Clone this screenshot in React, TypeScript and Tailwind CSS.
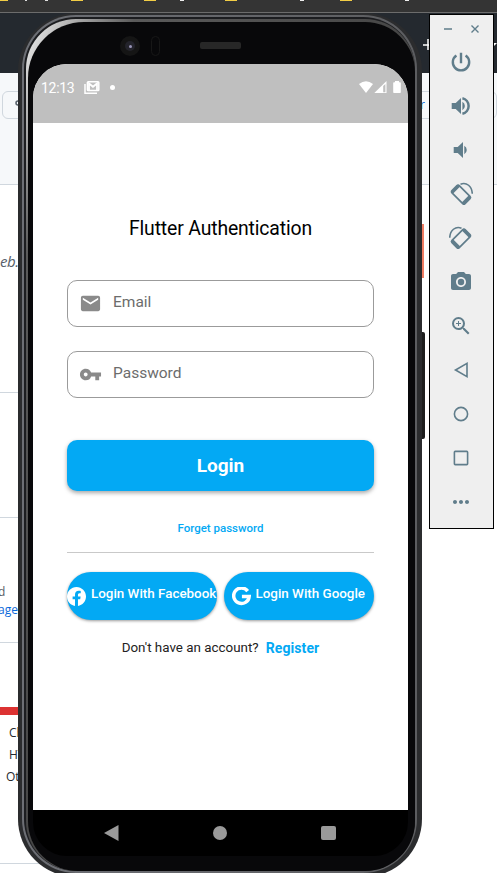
import type { ReactNode } from 'react';
import { MdCameraAlt, MdZoomIn, MdMoreHoriz, MdEmail, MdVpnKey } from 'react-icons/md';

/* Page behind the emulator window */
function Backdrop() {
  return (
    <div className="flex h-full w-full flex-col bg-white font-['Open_Sans',sans-serif] text-[13px] text-[#24292f]">
      <div className="flex h-[13px] shrink-0 items-start border-b border-[#6c6c6c] bg-[#343434]">
        <i className="h-px w-2 bg-[#f2cd45]" />
        <i className="ml-[17px] h-px w-[2px] bg-[#ddd]" />
        <i className="ml-[18px] h-px w-[3px] bg-[#ddd]" />
        <i className="ml-[23px] h-px w-3 bg-[#f2cd45]" />
        <i className="ml-[61px] h-px w-3 bg-[#f2cd45]" />
        <i className="ml-[24px] h-px w-1 bg-[#eee]" />
        <i className="ml-[41px] h-px w-3 bg-[#f2cd45]" />
        <i className="ml-[63px] h-px w-1 bg-[#eee]" />
        <i className="ml-[36px] h-px w-3 bg-[#f2cd45]" />
        <i className="ml-[53px] h-px w-1 bg-[#eee]" />
      </div>
      <div className="flex h-[60px] shrink-0 justify-end bg-[#24292f] text-white">
        <svg className="mt-[26px] h-3 w-[75px]" viewBox="0 0 75 12" fill="none" stroke="white" strokeWidth="1.5">
          <path d="M1 6h11M6 0v11" />
          <path d="M67 4h8l-4 4z" fill="white" stroke="none" />
        </svg>
      </div>
      <div className="flex h-[112px] shrink-0 items-start justify-between border-b border-[#d0d7de] bg-[#f6f8fa] pt-[18px]">
        <div className="ml-[2px] flex h-7 w-[60px] items-center rounded-md border border-[#d0d7de] pl-3">
          <svg className="h-3 w-3" viewBox="0 0 12 12" fill="none" stroke="#57606a" strokeWidth="1.5">
            <circle cx="3" cy="4" r="2" />
          </svg>
        </div>
        <div className="flex h-7 w-[96px] items-center rounded-md border border-[#d0d7de] pl-[18px] text-[12px] text-[#0969da]">
          r
        </div>
      </div>
      {/* article column */}
      <div className="flex w-[200px] flex-1 flex-col">
        <div className="h-[208px] shrink-0 border-b border-[#d0d7de] pt-[64px]">
          <span className="text-[15px] leading-6 tracking-[-0.4px] text-[#57606a] italic">eb.</span>
        </div>
        <div className="h-[125px] shrink-0 border-b border-[#d0d7de]" />
        <div className="h-[125px] shrink-0 border-b border-[#d0d7de] pt-[65px] text-[12px] leading-[18px]">
          <p className="-ml-[2px] text-[#57606a]">d</p>
          <p className="-ml-[2px] text-[#0969da]">age</p>
        </div>
        <div className="h-[221px] shrink-0 border-b border-[#d0d7de] pt-[64px]">
          <div className="h-2 w-[60px] bg-[#dc3232]" />
          <div className="pt-[7px] text-[12px] leading-[22px]">
            <p className="pl-[9px]">Ch</p>
            <p className="pl-[9px]">HT</p>
            <p className="pl-[6px]">Oth</p>
          </div>
        </div>
      </div>
    </div>
  );
}

function StatusBar() {
  return (
    <div className="flex h-[59px] shrink-0 items-start bg-[#bfbfbf] pt-[15px] pr-[7px] pl-[8px] text-white">
      <span className="w-[42.5px] text-[14px] leading-[18px] tracking-[-0.3px] whitespace-nowrap">12:13</span>
      <svg className="mt-[2px] h-[13px] w-4" viewBox="0 0 16 13" fill="none" stroke="white" strokeWidth="1.5">
        <path d="M1 3v9.2h12" />
        <rect x="3.4" y="0.8" width="11.4" height="8.8" rx="0.8" />
        <path d="M5 9V2.5l4 3.3 4-3.3V9" strokeWidth="1.8" />
      </svg>
      <i className="mt-[6px] ml-[10px] h-[5px] w-[5px] rounded-full bg-white" />
      <div className="flex-1" />
      <svg className="mt-[2px] h-3 w-[42px]" viewBox="0 0 42 12" fill="white">
        <path d="M0 2.9Q7-2.5 14 2.9L7 12z" />
        <path d="M27.5 0v12H15.3z" />
        <path d="M24.2 5v6.2h2.2V3z" fill="#bfbfbf" />
        <path d="M36 0h4v1.2h1a.8.8 0 0 1 .8.8v9.2a.8.8 0 0 1-.8.8h-6a.8.8 0 0 1-.8-.8V2a.8.8 0 0 1 .8-.8h1z" />
      </svg>
    </div>
  );
}

function Field({ icon, label }: { icon: ReactNode; label: string }) {
  return (
    <div className="flex h-[47px] items-center rounded-[10px] border border-[#9b9b9b] pl-[11px] text-[#8a8a8a]">
      <span className="flex w-[34px]">{icon}</span>
      <span className="-mt-px text-[15.5px] text-[#6c6c6c]">{label}</span>
    </div>
  );
}

function FacebookMark() {
  return (
    <svg className="h-[19px] w-[19px] shrink-0" viewBox="0 0 24 24" fill="white">
      <path d="M24 12.07C24 5.4 18.63 0 12 0S0 5.4 0 12.07C0 18.1 4.39 23.1 10.13 24v-8.44H7.08v-3.49h3.05V9.41c0-3.02 1.79-4.69 4.53-4.69 1.31 0 2.69.24 2.69.24v2.97h-1.52c-1.49 0-1.96.93-1.96 1.89v2.25h3.33l-.53 3.49h-2.8V24C19.61 23.1 24 18.1 24 12.07z" />
    </svg>
  );
}

function GoogleMark() {
  return (
    <svg className="h-[19px] w-[19px] shrink-0" viewBox="0 0 24 24" fill="none" stroke="white" strokeWidth="4.4">
      <path d="M19.8 5.2A9.8 9.8 0 1 0 21.7 12H12.5" />
    </svg>
  );
}

function LoginScreen() {
  return (
    <div className="flex h-[746px] w-[375px] shrink-0 flex-col overflow-hidden rounded-t-[34px] bg-white font-[Roboto,sans-serif]">
      <StatusBar />
      <div className="flex flex-1 flex-col px-[34px]">
        <h1 className="mt-[94px] text-center text-[19.4px] leading-6 tracking-[-0.15px] text-black">Flutter Authentication</h1>
        <div className="mt-[39px] flex flex-col gap-[23.5px]">
          <Field icon={<MdEmail size={23} />} label="Email" />
          <Field icon={<MdVpnKey size={23} />} label="Password" />
        </div>
        <button className="mt-[42.5px] h-[51px] rounded-[10px] bg-[#03a9f4] pt-[2px] text-[19px] font-bold text-white shadow-[0_2px_4px_rgba(0,0,0,0.35)]">
          Login
        </button>
        <a className="mt-[29px] text-center text-[11.5px] leading-4 font-medium text-[#03a9f4]">Forget password</a>
        <hr className="mt-4 border-[#c9c9c9]" />
        <div className="mt-[19px] flex justify-between text-[13.4px] font-medium text-white">
          <button className="flex h-12 w-[150px] items-center rounded-full bg-[#03a9f4] whitespace-nowrap shadow-[0_1px_3px_rgba(0,0,0,0.4)]">
            <FacebookMark />
            <span className="-mt-[3px] ml-[5px]">Login With Facebook</span>
          </button>
          <button className="flex h-12 w-[150px] items-center rounded-full bg-[#03a9f4] pl-[7.5px] whitespace-nowrap shadow-[0_1px_3px_rgba(0,0,0,0.4)]">
            <GoogleMark />
            <span className="-mt-[3px] ml-[5px]">Login With Google</span>
          </button>
        </div>
        <p className="mt-[19px] flex justify-center gap-[7px] text-[13.4px] leading-[18px] text-[#222]">
          <span>Don't have an account?</span>
          <b className="text-[14px] tracking-[0.1px] text-[#03a9f4]">Register</b>
        </p>
      </div>
    </div>
  );
}

function Phone() {
  return (
    <div className="relative h-[864px] w-[404px]">
      {/* side keys */}
      <i className="absolute top-[211px] right-[-2px] h-[54px] w-1 bg-[#ef7c62]" />
      <i className="absolute top-[319px] right-[-3px] h-[107px] w-2 rounded-r-xs bg-[#1d1d1d]" />
      <div className="relative h-full rounded-[58px] bg-[#2b2c2e] pt-[2px] pr-[5px] pb-[4px] pl-[4px]">
        <div className="h-full rounded-[54px] bg-linear-to-r from-[#6d6f75] to-[#5c5d60] pt-[2px] pr-[2px] pb-[2px] pl-[2px]">
          <div className="h-full rounded-[52px] bg-[#1c1d20] pt-[2px] pl-[2px]">
            <div className="h-full rounded-[50px] bg-linear-to-br from-[#e0e0e0] from-2% via-[#5a5a5a] via-14% to-[#2c2c2c] pt-[3px] pl-[2px]">
              <div className="flex h-full flex-col rounded-[50px] rounded-tl-[56px] bg-[#08080a] pl-[5px]">
                <div className="flex h-[42px] shrink-0">
                  <div className="mt-[14px] ml-[87px] flex h-5 w-5 items-center justify-center rounded-full bg-[#151515]">
                    <div className="flex h-[10px] w-[10px] items-center justify-center rounded-full bg-[#24242c]">
                      <i className="h-[3px] w-[3px] rounded-full bg-[#9995b8]" />
                    </div>
                  </div>
                  <i className="mt-[14px] ml-[11px] h-5 w-[9px] rounded-full border border-[#171717]" />
                  <i className="mt-[20px] ml-[40px] h-[7px] w-[41px] rounded-xs bg-[#272727]" />
                </div>
                <LoginScreen />
                <div className="flex h-[46px] w-[375px] shrink-0 justify-between rounded-b-[34px] bg-black pr-[72px] pl-[71px]">
                  <svg className="mt-[15px] h-4 w-[15px]" viewBox="0 0 15 16" fill="#9a9a9a">
                    <path d="M14.5 0v16L0 8z" />
                  </svg>
                  <i className="mt-4 h-[14px] w-[14px] rounded-full bg-[#9a9a9a]" />
                  <i className="mt-4 h-[14px] w-[15px] rounded-xs bg-[#9a9a9a]" />
                </div>
              </div>
            </div>
          </div>
        </div>
      </div>
    </div>
  );
}

function PowerIcon() {
  return (
    <svg className="h-6 w-6" viewBox="0 0 24 24" fill="none" stroke="currentColor" strokeWidth="2.4">
      <path d="M12 2.8v10.4M7.4 5.4a8.2 8.2 0 1 0 9.2 0" />
    </svg>
  );
}

function VolumeUpIcon() {
  return (
    <svg className="h-6 w-6" viewBox="0 0 24 24" fill="currentColor">
      <path d="M2.7 9v6h4l5.3 5V4L6.7 9z" />
      <path d="M13.4 7.8v8.4a4.8 4.8 0 0 0 0-8.4z" />
      <path d="M13.4 4.2a8 8 0 0 1 0 15.6" fill="none" stroke="currentColor" strokeWidth="2.5" />
    </svg>
  );
}

function VolumeDownIcon() {
  return (
    <svg className="h-6 w-6" viewBox="0 0 24 24" fill="currentColor">
      <path d="M4.7 9v6h4l5.3 5V4L8.7 9z" />
      <path d="M15.3 7.8v8.4a4.8 4.8 0 0 0 0-8.4z" />
    </svg>
  );
}

function RotateIcon({ mirrored = false }: { mirrored?: boolean }) {
  return (
    <svg className={mirrored ? 'h-6 w-6 -scale-x-100' : 'h-6 w-6'} viewBox="0 0 24 24" fill="none" stroke="currentColor">
      <g transform="rotate(-45 12 12.6)">
        <rect x="6.9" y="3.4" width="10.2" height="18.4" rx="1.6" strokeWidth="1.7" />
        <path d="M6.9 4.8h10.2M6.9 20.2h10.2" strokeWidth="3" />
      </g>
      <path d="M11.5 2.2C17.5-.4 23 4.4 23.3 11.8" strokeWidth="1.6" />
    </svg>
  );
}

function Toolbar() {
  const tools: ReactNode[] = [
    <PowerIcon />,
    <VolumeUpIcon />,
    <VolumeDownIcon />,
    <RotateIcon />,
    <RotateIcon mirrored />,
    <MdCameraAlt size={24} />,
    <MdZoomIn size={24} />,
    <svg width="16" height="18" viewBox="0 0 16 18" fill="none" stroke="currentColor" strokeWidth="1.6">
      <path d="M14 2.4v13.2L2.5 9z" />
    </svg>,
    <svg width="16" height="16" viewBox="0 0 16 16" fill="none" stroke="currentColor" strokeWidth="1.6">
      <circle cx="8" cy="8" r="6.6" />
    </svg>,
    <svg width="16" height="16" viewBox="0 0 16 16" fill="none" stroke="currentColor" strokeWidth="1.6">
      <rect x="1.4" y="1.4" width="13.2" height="13.2" rx="0.8" />
    </svg>,
    <MdMoreHoriz size={24} />,
  ];
  return (
    <div className="h-[515px] w-[65px] border border-black bg-[#efefef] text-[#607d8b]">
      <svg className="h-[25px] w-[63px]" viewBox="0 0 63 25" fill="none" stroke="currentColor" strokeWidth="1.4">
        <path d="M14 14h8M41.5 10.5l7 7M48.5 10.5l-7 7" />
      </svg>
      {tools.map((tool, i) => (
        <div key={i} className="flex h-11 items-center justify-center pr-[1px]">
          {tool}
        </div>
      ))}
    </div>
  );
}

export default function App() {
  return (
    <div className="relative h-[873px] w-[497px] overflow-hidden">
      <Backdrop />
      {/* windows floating over the page */}
      <div className="absolute top-[13px] left-[18px]">
        <Phone />
      </div>
      <div className="absolute top-[14px] left-[429px]">
        <Toolbar />
      </div>
    </div>
  );
}
